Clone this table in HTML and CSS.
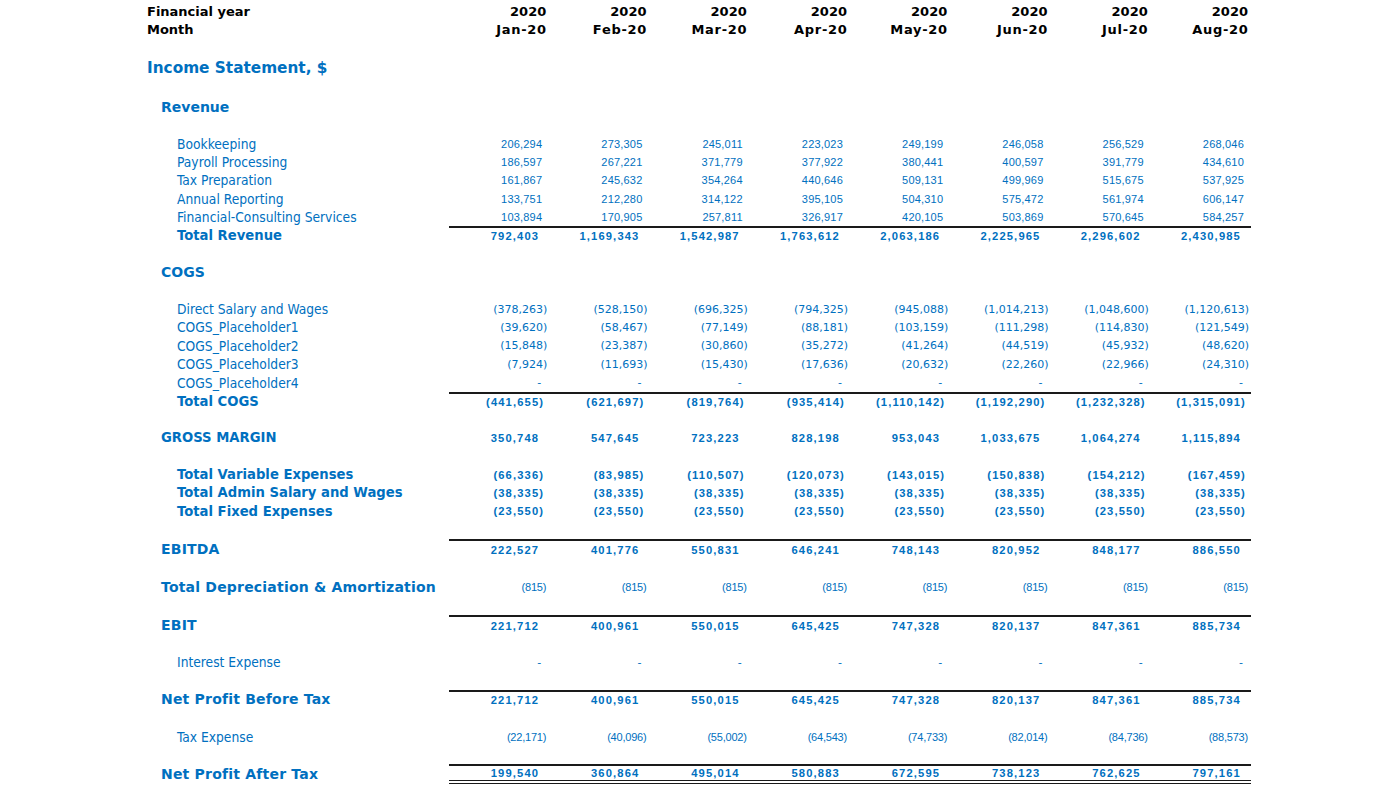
FILE: index.html
```html
<!DOCTYPE html>
<html>
<head>
<meta charset="utf-8">
<link rel="stylesheet" href="styles.css">
</head>
<body>
<div class="sheet">
  <div class="row hdr"><div class="lbl">Financial year</div><div class="vals"><span class="v">2020</span><span class="v">2020</span><span class="v">2020</span><span class="v">2020</span><span class="v">2020</span><span class="v">2020</span><span class="v">2020</span><span class="v">2020</span></div></div>
  <div class="row hdr months"><div class="lbl">Month</div><div class="vals"><span class="v">Jan-20</span><span class="v">Feb-20</span><span class="v">Mar-20</span><span class="v">Apr-20</span><span class="v">May-20</span><span class="v">Jun-20</span><span class="v">Jul-20</span><span class="v">Aug-20</span></div></div>
  <div class="row"></div>
  <div class="row title"><div class="lbl">Income Statement, $</div></div>
  <div class="row"></div>
  <div class="row sec"><div class="lbl">Revenue</div></div>
  <div class="row"></div>
  <div class="row item plain"><div class="lbl">Bookkeeping</div><div class="vals"><span class="v">206,294</span><span class="v">273,305</span><span class="v">245,011</span><span class="v">223,023</span><span class="v">249,199</span><span class="v">246,058</span><span class="v">256,529</span><span class="v">268,046</span></div></div>
  <div class="row item plain"><div class="lbl">Payroll Processing</div><div class="vals"><span class="v">186,597</span><span class="v">267,221</span><span class="v">371,779</span><span class="v">377,922</span><span class="v">380,441</span><span class="v">400,597</span><span class="v">391,779</span><span class="v">434,610</span></div></div>
  <div class="row item plain"><div class="lbl">Tax Preparation</div><div class="vals"><span class="v">161,867</span><span class="v">245,632</span><span class="v">354,264</span><span class="v">440,646</span><span class="v">509,131</span><span class="v">499,969</span><span class="v">515,675</span><span class="v">537,925</span></div></div>
  <div class="row item plain"><div class="lbl">Annual Reporting</div><div class="vals"><span class="v">133,751</span><span class="v">212,280</span><span class="v">314,122</span><span class="v">395,105</span><span class="v">504,310</span><span class="v">575,472</span><span class="v">561,974</span><span class="v">606,147</span></div></div>
  <div class="row item plain"><div class="lbl">Financial-Consulting Services</div><div class="vals"><span class="v">103,894</span><span class="v">170,905</span><span class="v">257,811</span><span class="v">326,917</span><span class="v">420,105</span><span class="v">503,869</span><span class="v">570,645</span><span class="v">584,257</span></div></div>
  <div class="row tot"><div class="lbl">Total Revenue</div><div class="vals line"><span class="v">792,403</span><span class="v">1,169,343</span><span class="v">1,542,987</span><span class="v">1,763,612</span><span class="v">2,063,186</span><span class="v">2,225,965</span><span class="v">2,296,602</span><span class="v">2,430,985</span></div></div>
  <div class="row"></div>
  <div class="row sec"><div class="lbl">COGS</div></div>
  <div class="row"></div>
  <div class="row item tah"><div class="lbl">Direct Salary and Wages</div><div class="vals"><span class="v">(378,263)</span><span class="v">(528,150)</span><span class="v">(696,325)</span><span class="v">(794,325)</span><span class="v">(945,088)</span><span class="v">(1,014,213)</span><span class="v">(1,048,600)</span><span class="v">(1,120,613)</span></div></div>
  <div class="row item tah"><div class="lbl">COGS_Placeholder1</div><div class="vals"><span class="v">(39,620)</span><span class="v">(58,467)</span><span class="v">(77,149)</span><span class="v">(88,181)</span><span class="v">(103,159)</span><span class="v">(111,298)</span><span class="v">(114,830)</span><span class="v">(121,549)</span></div></div>
  <div class="row item tah"><div class="lbl">COGS_Placeholder2</div><div class="vals"><span class="v">(15,848)</span><span class="v">(23,387)</span><span class="v">(30,860)</span><span class="v">(35,272)</span><span class="v">(41,264)</span><span class="v">(44,519)</span><span class="v">(45,932)</span><span class="v">(48,620)</span></div></div>
  <div class="row item tah"><div class="lbl">COGS_Placeholder3</div><div class="vals"><span class="v">(7,924)</span><span class="v">(11,693)</span><span class="v">(15,430)</span><span class="v">(17,636)</span><span class="v">(20,632)</span><span class="v">(22,260)</span><span class="v">(22,966)</span><span class="v">(24,310)</span></div></div>
  <div class="row item tah"><div class="lbl">COGS_Placeholder4</div><div class="vals"><span class="v d">-</span><span class="v d">-</span><span class="v d">-</span><span class="v d">-</span><span class="v d">-</span><span class="v d">-</span><span class="v d">-</span><span class="v d">-</span></div></div>
  <div class="row tot"><div class="lbl">Total COGS</div><div class="vals line"><span class="v n">(441,655)</span><span class="v n">(621,697)</span><span class="v n">(819,764)</span><span class="v n">(935,414)</span><span class="v n">(1,110,142)</span><span class="v n">(1,192,290)</span><span class="v n">(1,232,328)</span><span class="v n">(1,315,091)</span></div></div>
  <div class="row"></div>
  <div class="row sec gm"><div class="lbl">GROSS MARGIN</div><div class="vals"><span class="v">350,748</span><span class="v">547,645</span><span class="v">723,223</span><span class="v">828,198</span><span class="v">953,043</span><span class="v">1,033,675</span><span class="v">1,064,274</span><span class="v">1,115,894</span></div></div>
  <div class="row"></div>
  <div class="row tot"><div class="lbl">Total Variable Expenses</div><div class="vals"><span class="v n">(66,336)</span><span class="v n">(83,985)</span><span class="v n">(110,507)</span><span class="v n">(120,073)</span><span class="v n">(143,015)</span><span class="v n">(150,838)</span><span class="v n">(154,212)</span><span class="v n">(167,459)</span></div></div>
  <div class="row tot"><div class="lbl">Total Admin Salary and Wages</div><div class="vals"><span class="v n">(38,335)</span><span class="v n">(38,335)</span><span class="v n">(38,335)</span><span class="v n">(38,335)</span><span class="v n">(38,335)</span><span class="v n">(38,335)</span><span class="v n">(38,335)</span><span class="v n">(38,335)</span></div></div>
  <div class="row tot"><div class="lbl">Total Fixed Expenses</div><div class="vals"><span class="v n">(23,550)</span><span class="v n">(23,550)</span><span class="v n">(23,550)</span><span class="v n">(23,550)</span><span class="v n">(23,550)</span><span class="v n">(23,550)</span><span class="v n">(23,550)</span><span class="v n">(23,550)</span></div></div>
  <div class="row"></div>
  <div class="row sec big"><div class="lbl">EBITDA</div><div class="vals line"><span class="v">222,527</span><span class="v">401,776</span><span class="v">550,831</span><span class="v">646,241</span><span class="v">748,143</span><span class="v">820,952</span><span class="v">848,177</span><span class="v">886,550</span></div></div>
  <div class="row"></div>
  <div class="row sec big pneg"><div class="lbl">Total Depreciation &amp; Amortization</div><div class="vals"><span class="v">(815)</span><span class="v">(815)</span><span class="v">(815)</span><span class="v">(815)</span><span class="v">(815)</span><span class="v">(815)</span><span class="v">(815)</span><span class="v">(815)</span></div></div>
  <div class="row"></div>
  <div class="row sec big"><div class="lbl">EBIT</div><div class="vals line"><span class="v">221,712</span><span class="v">400,961</span><span class="v">550,015</span><span class="v">645,425</span><span class="v">747,328</span><span class="v">820,137</span><span class="v">847,361</span><span class="v">885,734</span></div></div>
  <div class="row"></div>
  <div class="row item tah"><div class="lbl">Interest Expense</div><div class="vals"><span class="v d">-</span><span class="v d">-</span><span class="v d">-</span><span class="v d">-</span><span class="v d">-</span><span class="v d">-</span><span class="v d">-</span><span class="v d">-</span></div></div>
  <div class="row"></div>
  <div class="row sec big"><div class="lbl">Net Profit Before Tax</div><div class="vals line"><span class="v">221,712</span><span class="v">400,961</span><span class="v">550,015</span><span class="v">645,425</span><span class="v">747,328</span><span class="v">820,137</span><span class="v">847,361</span><span class="v">885,734</span></div></div>
  <div class="row"></div>
  <div class="row item pneg"><div class="lbl">Tax Expense</div><div class="vals"><span class="v">(22,171)</span><span class="v">(40,096)</span><span class="v">(55,002)</span><span class="v">(64,543)</span><span class="v">(74,733)</span><span class="v">(82,014)</span><span class="v">(84,736)</span><span class="v">(88,573)</span></div></div>
  <div class="row"></div>
  <div class="row sec big"><div class="lbl">Net Profit After Tax</div><div class="vals line dbl"><span class="v">199,540</span><span class="v">360,864</span><span class="v">495,014</span><span class="v">580,883</span><span class="v">672,595</span><span class="v">738,123</span><span class="v">762,625</span><span class="v">797,161</span></div></div>
</div>
</body>
</html>
```
FILE: styles.css
```css
html, body {
  margin: 0;
  padding: 0;
  background: #ffffff;
}

.sheet {
  padding: 2px 0 0 147px;
  color: #0070c0;
  font-family: "DejaVu Sans", sans-serif;
}

.row {
  display: flex;
  align-items: stretch;
  height: 18.4px;
}

.row.title { height: 22px; }
.row.big { height: 19.6px; }

.lbl {
  width: 302px;
  flex: none;
  display: flex;
  align-items: center;
  white-space: nowrap;
  box-sizing: border-box;
}

.vals {
  width: 802px;
  flex: none;
  display: grid;
  grid-template-columns: repeat(8, 1fr);
  align-items: center;
  box-sizing: border-box;
}

.vals.line { border-top: 2px solid #1a1a1a; }
.vals.dbl { border-bottom: 4px double #1a1a1a; }

.v {
  text-align: right;
  white-space: nowrap;
}

/* header rows */
.hdr { color: #000; }
.hdr .lbl { font: bold 13px "DejaVu Sans", sans-serif; }
.hdr .v { font: bold 13px "DejaVu Sans", sans-serif; padding-right: 3px; }
.hdr.months .v { letter-spacing: 0.7px; padding-right: 2.5px; }

/* title */
.title .lbl { font: bold 15.3px "DejaVu Sans", sans-serif; }

/* level 1 section labels */
.sec .lbl {
  padding-left: 14px;
  font: bold 14px "DejaVu Sans", sans-serif;
}
.sec.gm .lbl { font-size: 13.2px; }
.sec.big .lbl { letter-spacing: 0.2px; }

/* level 2 */
.item .lbl {
  padding-left: 30px;
  font: 13.7px "DejaVu Sans Condensed", "DejaVu Sans", sans-serif;
}
.tot .lbl {
  padding-left: 30px;
  font: bold 13.2px "DejaVu Sans", sans-serif;
}

/* numbers */
.plain .v {
  font: 11px "Liberation Sans", Arial, sans-serif;
  letter-spacing: 0.2px;
  padding-right: 7px;
}
.pneg .v {
  font: 11px "Liberation Sans", Arial, sans-serif;
  letter-spacing: -0.2px;
  padding-right: 3px;
}
.tah .v {
  font: 11px "DejaVu Sans", sans-serif;
  padding-right: 2px;
}
.tah .v.d { padding-right: 8px; }

.tot .v,
.sec .v {
  font: bold 11.2px "Liberation Sans", Arial, sans-serif;
  letter-spacing: 1.15px;
  padding-right: 10px;
}
.tot .v.n { padding-right: 5px; }
.sec.pneg .v {
  font: 11px "Liberation Sans", Arial, sans-serif;
  letter-spacing: -0.2px;
  padding-right: 3px;
}
```
